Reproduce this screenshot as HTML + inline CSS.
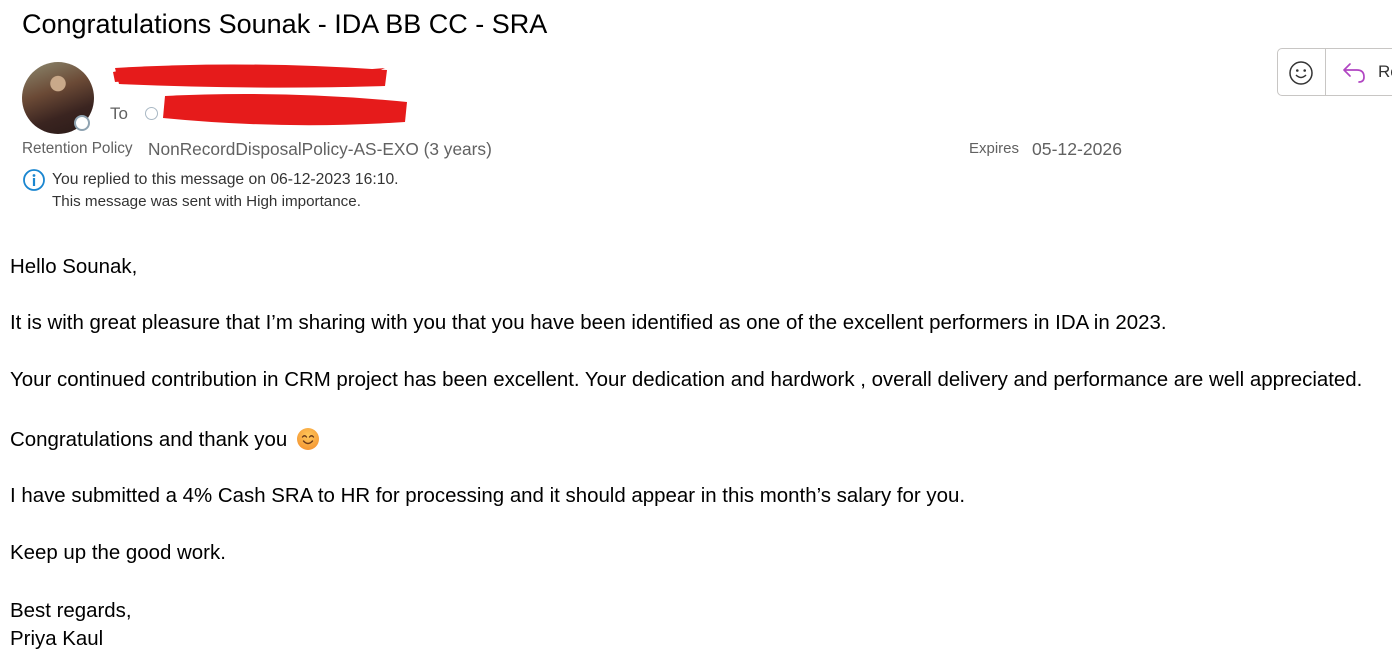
<!DOCTYPE html>
<html><head><meta charset="utf-8"><style>
body{margin:0;width:1392px;height:655px;background:#fff;position:relative;overflow:hidden;font-family:"Liberation Sans",sans-serif;color:#000}
.a{position:absolute;white-space:nowrap}
.b{font-size:20.45px;left:10px;line-height:28px}
.g{color:#616161}
</style></head><body>
<div class="a" style="left:22px;top:6px;font-size:27px;line-height:36px;color:#000">Congratulations Sounak - IDA BB CC - SRA</div>

<div class="a" style="left:22px;top:62px;width:72px;height:72px;border-radius:50%;background:radial-gradient(circle at 50% 30%,#c9a98a 0 12%,transparent 13%),linear-gradient(160deg,#8d8a70 0%,#6b4a36 40%,#3a2420 70%,#2a1a18 100%);"></div>
<div class="a" style="left:74px;top:115px;width:16px;height:16px;border-radius:50%;background:#fff;border:2px solid #8fa3b1;box-sizing:border-box"></div>

<svg class="a" style="left:105px;top:60px" width="310" height="70">
<path d="M8 12 C60 2,150 20,280 8 C250 22,120 14,10 22 Z" fill="#e61b1b"/>
<path d="M10 8 Q140 0 282 10 L280 26 Q150 30 14 24 Z" fill="#e61b1b"/>
<path d="M60 36 Q180 30 302 42 L300 62 Q180 70 58 58 Z" fill="#e61b1b"/>
</svg>
<div class="a" style="left:110px;top:104px;font-size:17px;color:#616161">To</div>
<div class="a" style="left:145px;top:107px;width:13px;height:13px;border-radius:50%;border:1.5px solid #a9b8c4;box-sizing:border-box"></div>

<div class="a g" style="left:22px;top:140px;font-size:15.3px">Retention Policy</div>
<div class="a g" style="left:148px;top:139px;font-size:17.3px">NonRecordDisposalPolicy-AS-EXO (3 years)</div>
<div class="a g" style="left:969px;top:140px;font-size:15px">Expires</div>
<div class="a g" style="left:1032px;top:139px;font-size:17.6px">05-12-2026</div>

<svg class="a" style="left:22px;top:169px" width="24" height="24"><circle cx="12" cy="11" r="10" fill="none" stroke="#1a86d0" stroke-width="1.8"/><circle cx="12" cy="6.5" r="1.4" fill="#1a86d0"/><rect x="10.9" y="9" width="2.2" height="8" fill="#1a86d0"/></svg>
<div class="a" style="left:52px;top:171px;font-size:15.7px;color:#333">You replied to this message on 06-12-2023 16:10.</div>
<div class="a" style="left:52px;top:193px;font-size:15.2px;color:#333">This message was sent with High importance.</div>

<div class="a" style="left:1277px;top:48px;width:130px;height:48px;border:1px solid #c8c6c4;border-radius:5px;box-sizing:border-box"></div>
<div class="a" style="left:1325px;top:49px;width:1px;height:46px;background:#c8c6c4"></div>
<svg class="a" style="left:1288px;top:60px" width="26" height="26"><circle cx="13" cy="13" r="11" fill="none" stroke="#333" stroke-width="1.5"/><circle cx="9.3" cy="10.5" r="1.3" fill="#333"/><circle cx="16.7" cy="10.5" r="1.3" fill="#333"/><path d="M8 15 Q13 20 18 15" fill="none" stroke="#333" stroke-width="1.5"/></svg>
<svg class="a" style="left:1340px;top:58px" width="30" height="30"><path d="M10 6 L4 12 L10 18 M4 12 H17 Q24 12 24 19 Q24 24 19 24" fill="none" stroke="#b146c2" stroke-width="1.7" stroke-linejoin="round" stroke-linecap="round"/></svg>
<div class="a" style="left:1378px;top:62px;font-size:17px;color:#333">Re</div>

<div class="a b" style="top:253px">Hello Sounak,</div>
<div class="a b" style="top:309px">It is with great pleasure that I’m sharing with you that you have been identified as one of the excellent performers in IDA in 2023.</div>
<div class="a b" style="top:366px">Your continued contribution in CRM project has been excellent. Your dedication and hardwork , overall delivery and performance are well appreciated.</div>
<div class="a b" style="top:426px">Congratulations and thank you <span style="display:inline-block;width:22px;height:22px;border-radius:50%;background:radial-gradient(circle at 50% 35%,#ffc85a,#f28a2a);vertical-align:-4px;position:relative;margin-left:4px"><svg width="22" height="22" style="position:absolute;left:0;top:0"><path d="M5.5 9 Q7.5 6.5 9.5 9 M12.5 9 Q14.5 6.5 16.5 9 M6.5 13 Q11 18 15.5 13" fill="none" stroke="#6b3a1a" stroke-width="1.4" stroke-linecap="round"/></svg></span></div>
<div class="a b" style="top:482px">I have submitted a 4% Cash SRA to HR for processing and it should appear in this month’s salary for you.</div>
<div class="a b" style="top:539px">Keep up the good work.</div>
<div class="a b" style="top:597px">Best regards,</div>
<div class="a b" style="top:625px">Priya Kaul</div>
</body></html>
